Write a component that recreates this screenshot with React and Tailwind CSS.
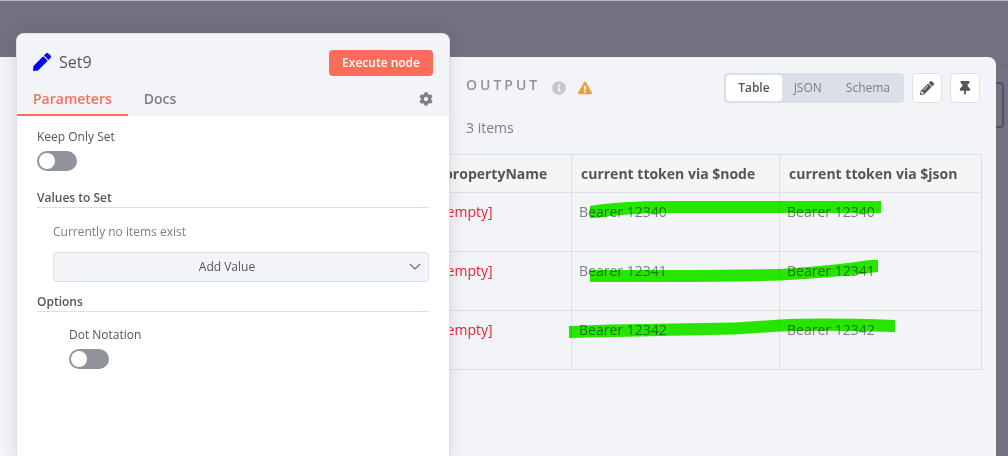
import React from "react";
import {
  FaPen,
  FaCog,
  FaInfoCircle,
  FaExclamationTriangle,
  FaPencilAlt,
  FaThumbtack,
} from "react-icons/fa";

const rows = [
  { node: "Bearer 12340", json: "Bearer 12340" },
  { node: "Bearer 12341", json: "Bearer 12341" },
  { node: "Bearer 12342", json: "Bearer 12342" },
];

function Toggle({ id, label }) {
  return (
    <div className="flex flex-col items-start gap-1.5">
      <label htmlFor={id} className="text-xs leading-4 text-[#555555]">
        {label}
      </label>
      <input
        id={id}
        type="checkbox"
        role="switch"
        className="flex h-5 w-10 cursor-pointer appearance-none items-center rounded-full bg-[#909399] p-0.5 before:size-4 before:rounded-full before:bg-white checked:justify-end checked:bg-[#ff6d5a]"
      />
    </div>
  );
}

function SectionTitle({ children }) {
  return (
    <h3 className="border-b border-[#dbdfe7] text-xs leading-[18px] font-semibold text-[#555555]">
      {children}
    </h3>
  );
}

function NodePanel() {
  return (
    <section className="z-10 mt-8 flex w-[434px] shrink-0 flex-col overflow-hidden rounded-t-lg border border-b-0 border-[#dbdfe7] bg-white shadow-[0_0_16px_rgba(68,68,100,0.16)]">
      <header className="flex flex-col bg-[#f2f4f8]">
        <div className="flex items-start justify-between px-4 pt-4">
          <h1 className="flex items-center gap-2 text-base leading-6 font-medium text-[#555555]">
            <FaPen className="size-[18px] text-[#0000ff]" />
            Set9
          </h1>
          <button className="h-[26px] rounded bg-[#ff6d5a] px-[13px] text-xs leading-4 font-semibold text-white">
            Execute node
          </button>
        </div>
        <nav className="mt-1.5 flex items-stretch text-sm leading-5 font-semibold">
          <button className="h-[34px] border-b-2 border-[#ff6d5a] px-4 pt-0.5 text-[#ff6d5a]">
            Parameters
          </button>
          <button className="h-[34px] border-b-2 border-transparent px-4 pt-0.5 text-[#7d7d87]">
            Docs
          </button>
          <button
            aria-label="Settings"
            className="mr-4 ml-auto text-sm text-[#7d7d87]"
          >
            <FaCog />
          </button>
        </nav>
      </header>

      <div className="flex flex-col px-5 pt-[13px]">
        <Toggle id="keep-only-set" label="Keep Only Set" />
        <div className="mt-[18px]">
          <SectionTitle>Values to Set</SectionTitle>
        </div>
        <p className="mt-4 ml-4 text-xs leading-4 text-[#7d7d87]">
          Currently no items exist
        </p>
        <div className="relative mt-3 ml-4">
          <select
            aria-label="Add Value"
            className="h-[30px] w-full appearance-none rounded border border-[#dbdfe7] bg-[#f2f4f8] pr-7 text-center text-xs text-[#555555]"
          >
            <option>Add Value</option>
          </select>
          <svg
            viewBox="0 0 12 8"
            className="pointer-events-none absolute top-[11px] right-2 h-2 w-3"
            fill="none"
            stroke="#666666"
            strokeWidth="1.1"
          >
            <path d="M1 1l5 5 5-5" />
          </svg>
        </div>
        <div className="mt-[11px]">
          <SectionTitle>Options</SectionTitle>
        </div>
        <div className="mt-[15px] ml-8">
          <Toggle id="dot-notation" label="Dot Notation" />
        </div>
      </div>
    </section>
  );
}

function OutputTable() {
  return (
    <div className="relative mt-4 mr-3.5 -ml-4">
      <table className="w-full table-fixed border-collapse text-left text-sm leading-5">
        <colgroup>
          <col className="w-[137px]" />
          <col className="w-[208px]" />
          <col />
        </colgroup>
        <thead>
          <tr className="h-[38px] bg-[#f5f5f7] font-bold text-[#555555]">
            <th className="border border-[#dbdfe7] px-[9px]">propertyName</th>
            <th className="border border-[#dbdfe7] px-[9px]">
              current ttoken via $node
            </th>
            <th className="border border-[#dbdfe7] px-[9px]">
              current ttoken via $json
            </th>
          </tr>
        </thead>
        <tbody>
          {rows.map((row) => (
            <tr key={row.node} className="h-[59px] align-top text-[#7d7d87]">
              <td className="border border-[#dbdfe7] px-[7px] pt-[9px] text-[#ea1f30]">
                [empty]
              </td>
              <td className="border border-[#dbdfe7] px-[7px] pt-[9px]">
                {row.node}
              </td>
              <td className="border border-[#dbdfe7] px-[7px] pt-[9px]">
                {row.json}
              </td>
            </tr>
          ))}
        </tbody>
      </table>
      <svg
        aria-hidden="true"
        className="pointer-events-none absolute top-0 left-0 h-full w-full mix-blend-multiply"
        fill="#2af000"
      >
        <path d="M156 52Q186 47 233 47H447V59H233Q196 59 162 64H156Z" />
        <path d="M156 116H266L346 115Q396 112 436 106H444V118Q396 124 346 126.500Q296 128 156 128Z" />
        <path d="M135 172L176 170.500L301 168.500L346 165.500Q386 163.500 461 166V178Q386 176 346 177.500L301 180.500L226 182L135 184Z" />
      </svg>
    </div>
  );
}

function OutputPanel() {
  return (
    <section className="mt-14 min-w-0 flex-1 overflow-hidden rounded-tr-lg bg-[#f2f4f8]">
      <div className="flex items-start justify-between px-4 pt-4">
        <div className="flex items-center gap-3 pt-0.5">
          <h2 className="text-sm leading-5 font-semibold tracking-[3px] text-[#909399]">
            OUTPUT
          </h2>
          <div className="flex gap-3 pt-1.5 text-sm">
            <FaInfoCircle className="text-[#c4c7cd]" />
            <FaExclamationTriangle className="text-[#e6a23d]" />
          </div>
        </div>
        <div className="flex gap-2">
          <div className="flex h-[30px] items-center rounded bg-[#dbdfe7] p-0.5 text-xs leading-4 text-[#7d7d87]">
            <button
              aria-pressed="true"
              className="h-[26px] rounded bg-white px-3 font-semibold text-[#555555]"
            >
              Table
            </button>
            <button aria-pressed="false" className="h-[26px] px-3 font-medium">
              JSON
            </button>
            <button aria-pressed="false" className="h-[26px] px-3 font-medium">
              Schema
            </button>
          </div>
          <button
            aria-label="Edit output"
            className="flex size-[30px] items-center justify-center rounded border border-[#dbdfe7] bg-white text-sm text-[#555555]"
          >
            <FaPencilAlt />
          </button>
          <button
            aria-label="Pin data"
            className="flex size-[30px] items-center justify-center rounded border border-[#dbdfe7] bg-white text-sm text-[#555555]"
          >
            <FaThumbtack />
          </button>
        </div>
      </div>
      <p className="mt-[15px] ml-4 text-sm leading-5 text-[#7d7d87]">3 items</p>
      <OutputTable />
    </section>
  );
}

export default function App() {
  return (
    <main className="flex min-h-screen border-t border-[#b9b8bf] bg-[#737080] font-['Open_Sans',sans-serif]">
      <div className="mt-14 w-4 shrink-0 bg-[#f2f4f8]" />
      <NodePanel />
      <OutputPanel />
      <div className="mt-16 w-3 shrink-0 border-t border-[#696778] pt-4">
        <div className="h-[46px] w-2 rounded-r border-2 border-l-0 border-[#535165]" />
      </div>
    </main>
  );
}
